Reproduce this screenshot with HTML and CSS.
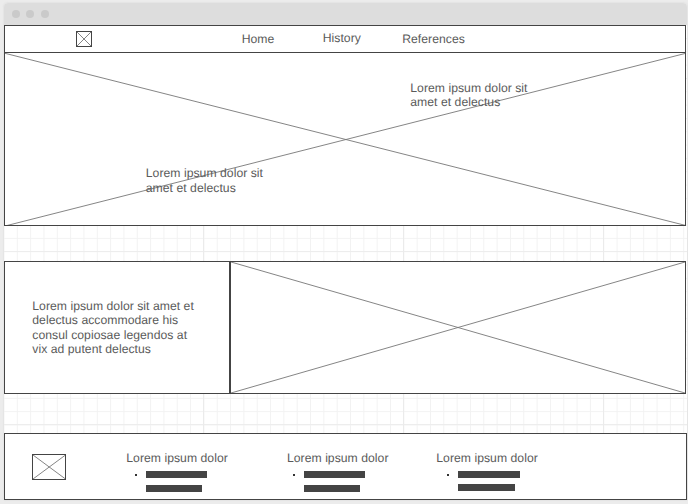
FILE: index.html
```html
<!DOCTYPE html>
<html lang="en">
<head>
<meta charset="utf-8">
<title>Wireframe</title>
<link rel="stylesheet" href="styles.css">
</head>
<body>
<div class="window">
  <div class="titlebar"><i class="dot"></i><i class="dot"></i><i class="dot"></i></div>
  <nav class="nav">
    <svg class="logo" viewBox="0 0 16 16"><path class="cross" d="M1 1L15 15M15 1L1 15"/><rect class="frame" x=".5" y=".5" width="15" height="15"/></svg>
    <a class="home">Home</a><a class="history">History</a><a class="references">References</a>
  </nav>
  <section class="hero">
    <svg class="hero-cross" viewBox="0 0 680 172"><path class="cross" d="M0 .3L682 172.8M680 .5L2 172.5"/></svg>
    <p class="caption caption-right">Lorem ipsum dolor sit<br>amet et delectus</p>
    <p class="caption caption-left">Lorem ipsum dolor sit<br>amet et delectus</p>
  </section>
  <section class="feature">
    <div class="copy"><p>Lorem ipsum dolor sit amet et<br>delectus accommodare his<br>consul copiosae legendos at<br>vix ad putent delectus</p></div>
    <svg class="picture" viewBox="0 0 454 131"><path class="cross" d="M0 0L454 131M454 0L0 131"/></svg>
  </section>
  <footer class="footer">
    <svg class="mark" viewBox="0 0 34 26"><path class="cross" d="M1 1L33.5 25M33.5 1L1 25"/><rect class="frame" x=".5" y=".5" width="33" height="25"/></svg>
    <div class="column first"><p>Lorem ipsum dolor</p><div class="bars"><i class="bullet"></i><b></b><b class="short"></b></div></div>
    <div class="column second"><p>Lorem ipsum dolor</p><div class="bars"><i class="bullet"></i><b></b><b class="short"></b></div></div>
    <div class="column third"><p>Lorem ipsum dolor</p><div class="bars"><i class="bullet"></i><b></b><b class="short"></b></div></div>
  </footer>
</div>
</body>
</html>
```
FILE: styles.css
```css
* { box-sizing: border-box; }
html { background: #ececec; }
body {
  margin: 0;
  padding: 3px 0 0 4px;
  height: 504px;
  overflow: hidden;
  color: #5a5a5a;
  font: 12.2px/14.4px "Liberation Sans", Arial, sans-serif;
  letter-spacing: 0.035px;
  text-rendering: geometricPrecision;
}
p { margin: 0; white-space: nowrap; }
svg { display: block; flex: none; }
.window {
  width: 683px;
  height: 497px;
  border-radius: 4px 4px 0 0;
  box-shadow: 0 0 2px #d2d2d2;
  background-color: #fff;
  background-image:
    linear-gradient(90deg, #ebebeb 1px, transparent 1px),
    linear-gradient(#ededed 1px, transparent 1px),
    linear-gradient(90deg, #f2f2f2 1px, transparent 1px),
    linear-gradient(#f2f2f2 1px, transparent 1px);
  background-size: 200px 100%, 100% 173px, 13.333px 100%, 100% 13.333px;
  background-position: -1px 0, 0 75px, -0.5px 0, 0 -5px;
}
.titlebar {
  display: flex;
  gap: 6px;
  height: 22px;
  padding: 7px 0 0 8px;
  border-radius: 4px 4px 0 0;
  background: #ddd;
}
.dot { width: 8px; height: 8px; border-radius: 50%; background: #cacaca; }
.dot:last-child { margin-left: 1px; }
.nav {
  display: flex;
  width: 682px;
  height: 28px;
  border: 1px solid #444;
  background: #fff;
}
.logo { width: 16px; height: 16px; margin: 5px 0 0 71px; }
.nav a { margin-top: 6px; }
.nav .home { width: 81px; margin-left: 149.7px; }
.nav .history { width: 79.5px; margin-top: 5px; }
.frame { fill: none; stroke: #444; }
.cross { fill: none; stroke: #777; stroke-width: 0.9; }
.hero {
  position: relative;
  width: 682px;
  height: 173px;
  border: 1px solid #444;
  border-top: 0;
  background: #fff;
}
.hero-cross { width: 680px; height: 172px; }
.caption { position: absolute; }
.caption-right { left: 405.3px; top: 28px; }
.caption-left { left: 140.8px; top: 113.4px; }
.feature {
  display: flex;
  width: 682px;
  height: 133px;
  margin-top: 35px;
  border: 1px solid #444;
  background: #fff;
}
.copy { width: 226px; padding: 37px 0 0 27.3px; border-right: 2px solid #444; }
.picture { width: 454px; height: 131px; }
.footer {
  display: flex;
  height: 67px;
  margin-top: 39px;
  border: 1px solid #444;
  background: #fff;
}
.mark { width: 34px; height: 26px; margin: 20px 0 0 27px; }
.column { flex: none; padding-top: 17px; }
.first { width: 160.7px; margin-left: 60.3px; }
.second { width: 149.3px; }
.bars {
  display: grid;
  grid-template-columns: 2px 61px;
  grid-template-rows: 7px 7px;
  column-gap: 9px;
  row-gap: 7px;
  margin: 5.6px 0 0 8.7px;
}
.bars b { grid-column: 2; background: #444; }
.bars .short { width: 56px; }
.bullet { width: 2px; height: 2px; margin-top: 3px; background: #333; }
.second .bars { margin-left: 6px; }
.third .bars { margin-left: 10.7px; grid-template-columns: 2px 62px; row-gap: 6px; }
.third .short { width: 57px; }
```
